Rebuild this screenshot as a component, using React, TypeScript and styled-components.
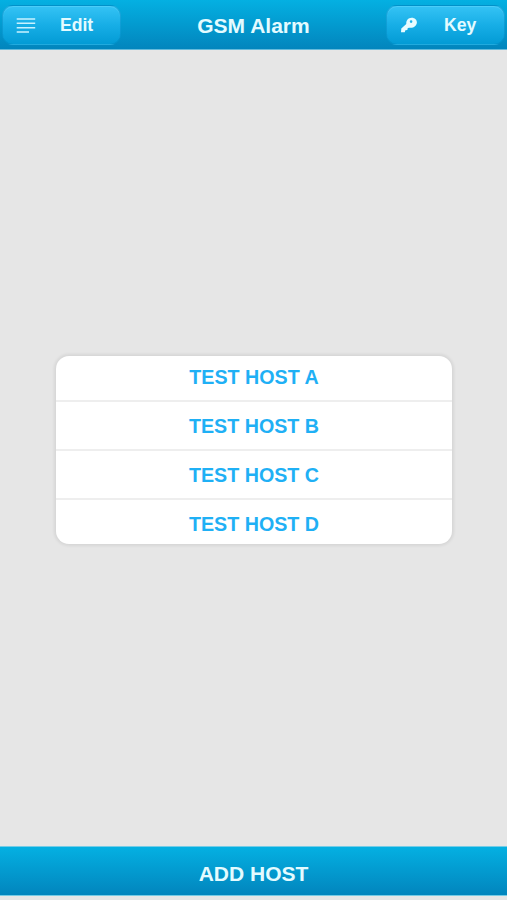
import React from 'react';
import styled, { createGlobalStyle } from 'styled-components';

const GlobalStyle = createGlobalStyle`
  * { box-sizing: border-box; }
  body { margin: 0; background: #e6e6e6; }
  button { font-family: inherit; cursor: pointer; }
`;

const Screen = styled.div`
  height: 900px;
  display: grid;
  grid-template-rows: 50px 1fr 50px;
  padding-bottom: 4px;
  background: #e6e6e6;
  font-family: "Liberation Sans", Arial, sans-serif;
  font-weight: 700;
`;

const Header = styled.header`
  display: grid;
  grid-template-columns: 119px 1fr 119px;
  align-items: start;
  padding: 5px 2px 0 2px;
  background: linear-gradient(#04b0e2, #0285bd);
  border-bottom: 1px solid #65bbdc;
`;

const Title = styled.h1`
  margin: 0;
  text-align: center;
  font-size: 21px;
  line-height: 41px;
  color: #e4fbff;
`;

const HeaderButton = styled.button<{ $labelGap: number; $inset: number }>`
  display: flex;
  align-items: center;
  gap: ${(p) => p.$labelGap}px;
  height: 40px;
  padding: 0 0 0 ${(p) => p.$inset}px;
  border: 1px solid rgba(0, 125, 180, 0.35);
  border-radius: 11px;
  background: linear-gradient(#35c3f5, #17aee6 50%, #039bd5);
  box-shadow: inset 0 1px 0 rgba(110, 220, 255, 0.4);
  color: #e4fbff;
  font-size: 17.6px;
  font-weight: 700;
  line-height: 20px;
`;

const Main = styled.main`
  display: flex;
  flex-direction: column;
  align-items: center;
  padding: 306px 0 0 1px;
`;

const HostList = styled.ul`
  width: 396px;
  height: 188px;
  margin: 0;
  padding: 0;
  list-style: none;
  border-radius: 13px;
  background: #fff;
  box-shadow: 0 0 3px 2px rgba(0, 0, 0, 0.07);
  display: grid;
  grid-template-rows: 46px 49px 49px 44px;
`;

const Host = styled.li`
  display: flex;
  justify-content: center;
  padding-top: 13px;
  font-size: 19.7px;
  line-height: 22px;
  color: #1fb0f5;
  &:first-child { padding-top: 10px; }
  &:not(:last-child) { border-bottom: 2px solid #eeeeee; }
`;

const AddButton = styled.button`
  border: solid #75cbe5;
  border-width: 1px 0;
  padding: 6px 0 0;
  background: linear-gradient(#04b0e2, #0285bd);
  color: #e4fbff;
  font-size: 21px;
  font-weight: 700;
`;

const ListIcon = () => (
  <svg width="20" height="18" viewBox="0 0 20 18" stroke="#c9f2ff" strokeWidth="1.6">
    <path d="M.7 3h18.500M.7 7.300h18.500M.7 11.700h18.500M.7 16h12.300" />
  </svg>
);

const KeyIcon = () => (
  <svg width="18" height="18" viewBox="0 0 18 18" fill="#e9fcff">
    <path
      fillRule="evenodd"
      d="M11.700 1.800C8.300 1.700 6 4.500 6.300 7.900L1.300 12.600 1 16.200h3.700l.7-1.900 1.900-.4.5-1.900 1.500-.3c3.700.8 7.500-1.700 7.600-5.200.1-2.600-2-4.600-5.200-4.700Zm-.6 2.500a1.300 1.300 0 1 1 0 2.600 1.300 1.300 0 0 1 0-2.600Z"
    />
  </svg>
);

const hosts = ['TEST HOST A', 'TEST HOST B', 'TEST HOST C', 'TEST HOST D'];

export default function App() {
  return (
    <Screen>
      <GlobalStyle />
      <Header>
        <HeaderButton $inset={13} $labelGap={24}>
          <ListIcon />
          Edit
        </HeaderButton>
        <Title>GSM Alarm</Title>
        <HeaderButton $inset={13} $labelGap={26}>
          <KeyIcon />
          Key
        </HeaderButton>
      </Header>
      <Main>
        <HostList>
          {hosts.map((name) => (
            <Host key={name}>{name}</Host>
          ))}
        </HostList>
      </Main>
      <AddButton>ADD HOST</AddButton>
    </Screen>
  );
}
